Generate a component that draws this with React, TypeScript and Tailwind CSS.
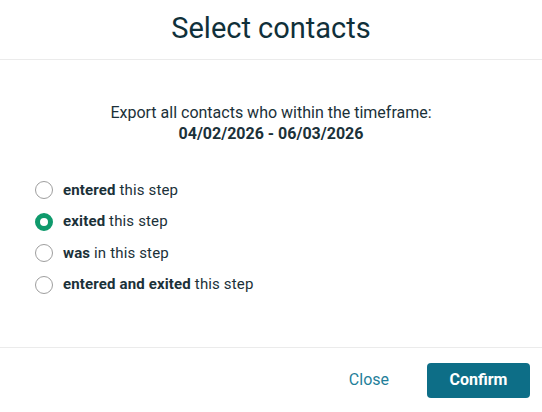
import React, { useState } from "react";

const options = [
  { bold: "entered", rest: " this step" },
  { bold: "exited", rest: " this step" },
  { bold: "was", rest: " in this step" },
  { bold: "entered and exited", rest: " this step" },
];

export default function App() {
  const [sel, setSel] = useState(1);
  return (
    <div
      className="w-[542px] h-[412px] bg-white flex flex-col text-[#1b3139]"
      style={{ fontFamily: "Roboto, 'Liberation Sans', sans-serif" }}
    >
      <div className="h-[60px] shrink-0 border-b border-[#ebebeb] flex items-center justify-center">
        <h1 className="text-[29px] leading-none font-normal text-[#10303a] -mt-[3px]">Select contacts</h1>
      </div>
      <div className="flex-1 flex flex-col">
        <div className="mt-[42px] text-center text-[16px] leading-[21px]">
          <div>Export all contacts who within the timeframe:</div>
          <div className="font-bold">04/02/2026 - 06/03/2026</div>
        </div>
        <div className="mt-[37px] pl-[35px] flex flex-col gap-[13.5px]">
          {options.map((o, i) => (
            <label key={i} className="flex items-center gap-[10px] cursor-pointer h-[18px]" onClick={() => setSel(i)}>
              {sel === i ? (
                <span className="w-[18px] h-[18px] rounded-full border-[5px] border-[#0f9a6c] bg-white box-border" />
              ) : (
                <span className="w-[18px] h-[18px] rounded-full border border-[#9e9e9e] bg-white box-border" />
              )}
              <span className="text-[15px] tracking-[0.15px]">
                <span className="font-bold">{o.bold}</span>
                {o.rest}
              </span>
            </label>
          ))}
        </div>
      </div>
      <div className="h-[65px] shrink-0 border-t border-[#ebebeb] flex items-center justify-end pr-[12px] gap-[38px]">
        <button className="text-[16px] text-[#1f7f9a] bg-transparent">Close</button>
        <button className="w-[103px] h-[35px] rounded-[4px] bg-[#0d6e87] text-white text-[16px] font-bold">Confirm</button>
      </div>
    </div>
  );
}
